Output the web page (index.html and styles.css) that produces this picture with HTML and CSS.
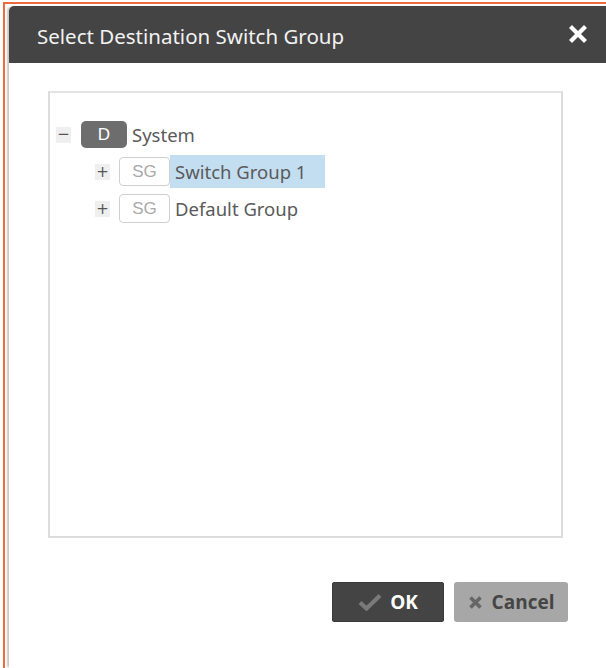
FILE: index.html
```html
<!DOCTYPE html>
<html lang="en">
<head>
<meta charset="utf-8">
<title>Select Destination Switch Group</title>
<link rel="stylesheet" href="styles.css">
</head>
<body>
<div class="frame">
  <div class="dialog">
    <header class="dialog-head">
      <h1 class="dialog-title">Select Destination Switch Group</h1>
      <button class="close" aria-label="Close">
        <svg width="18" height="18" viewBox="0 0 18 18"><path d="M3 3 L15 15 M15 3 L3 15" stroke="#fff" stroke-width="4.2" stroke-linecap="square"/></svg>
      </button>
    </header>
    <div class="dialog-body">
      <div class="tree">
        <div class="node">
          <span class="toggle">&minus;</span>
          <span class="badge badge-domain">D</span>
          <span class="label">System</span>
        </div>
        <div class="node child">
          <span class="toggle">+</span>
          <span class="badge badge-group">SG</span>
          <span class="label selected">Switch Group 1</span>
        </div>
        <div class="node child">
          <span class="toggle">+</span>
          <span class="badge badge-group">SG</span>
          <span class="label">Default Group</span>
        </div>
      </div>
      <div class="actions">
        <button class="btn btn-ok">
          <svg width="24" height="18" viewBox="0 0 24 18"><path d="M2 9.5 L8.5 15.5 L22 2.5" fill="none" stroke="#7a7a7a" stroke-width="4.2"/></svg>
          OK
        </button>
        <button class="btn btn-cancel">
          <svg width="15" height="15" viewBox="0 0 15 15"><path d="M2.5 2.5 L12.5 12.5 M12.5 2.5 L2.5 12.5" stroke="#666" stroke-width="3.6"/></svg>
          Cancel
        </button>
      </div>
    </div>
  </div>
</div>
</body>
</html>
```
FILE: styles.css
```css
html, body {
  margin: 0;
  padding: 0;
  background: #fff;
  overflow: hidden;
}

.frame {
  margin: 2px 0 0 3px;
  border-left: 2px solid #ee6b3b;
  border-top: 2px solid #ee6b3b;
  height: 664px;
}

.dialog {
  margin: 2px 0 0 4px;
  width: 620px;
  height: 662px;
  background: #fff;
  border-top-left-radius: 5px;
  box-shadow: -3px 0 2px -1px rgba(0, 0, 0, 0.22);
  font-family: "Noto Sans", "Open Sans", sans-serif;
}

.dialog-head {
  height: 57px;
  background: #444;
  border-top-left-radius: 5px;
  display: flex;
  align-items: center;
  justify-content: space-between;
  padding: 0 0 0 28px;
}

.dialog-title {
  margin: 0;
  font-size: 20.5px;
  font-weight: normal;
  color: #f2f2f2;
  letter-spacing: 0;
  padding-top: 3px;
}

.close {
  border: 0;
  background: transparent;
  padding: 0;
  margin-right: 42px;
  margin-bottom: 2px;
  display: flex;
  width: 18px;
  height: 18px;
}

.dialog-body {
  padding: 28px 0 0 39px;
}

.tree {
  width: 511px;
  height: 420px;
  border: 2px solid #dcdcdc;
  border-top-color: #e3e3e3;
  padding-top: 23px;
  box-sizing: content-box;
}

.node {
  display: flex;
  align-items: center;
  height: 37px;
  padding-left: 6px;
}

.node.child {
  padding-left: 45px;
}

.toggle {
  width: 15px;
  height: 16px;
  background: #efefef;
  color: #555;
  font-family: "DejaVu Sans", sans-serif;
  font-size: 15px;
  line-height: 16px;
  text-align: center;
  margin-right: 9px;
}

.node:first-child .toggle {
  margin-right: 10px;
  line-height: 15px;
}

.badge {
  display: flex;
  align-items: center;
  justify-content: center;
  font-family: "Liberation Sans", Arial, sans-serif;
  font-size: 17px;
  box-sizing: border-box;
}

.badge-domain {
  width: 46px;
  height: 27px;
  border-radius: 5px;
  background: #6d6d6d;
  color: #fff;
}

.badge-group {
  width: 51px;
  height: 29px;
  border-radius: 4px;
  border: 1px solid #cfcfcf;
  background: #fff;
  color: #a9a9a9;
}

.label {
  font-size: 18.5px;
  color: #5a5a5a;
  padding-left: 5px;
  line-height: 33px;
  height: 33px;
}

.label.selected {
  background: #c4def1;
  width: 150px;
}

.actions {
  display: flex;
  gap: 10px;
  width: 520px;
  justify-content: flex-end;
  margin-top: 44px;
}

.btn {
  height: 40px;
  border: 0;
  border-radius: 3px;
  display: flex;
  align-items: center;
  justify-content: center;
  gap: 8px;
  font-family: "Open Sans", "Noto Sans", sans-serif;
  font-weight: bold;
  font-size: 19px;
  padding: 0;
}

.btn-ok {
  width: 112px;
  background: #444;
  color: #fff;
  box-shadow: inset 0 0 0 1px #3a3a3a;
}

.btn-cancel {
  width: 114px;
  background: #a7a7a7;
  color: #454545;
  gap: 9px;
}
```
